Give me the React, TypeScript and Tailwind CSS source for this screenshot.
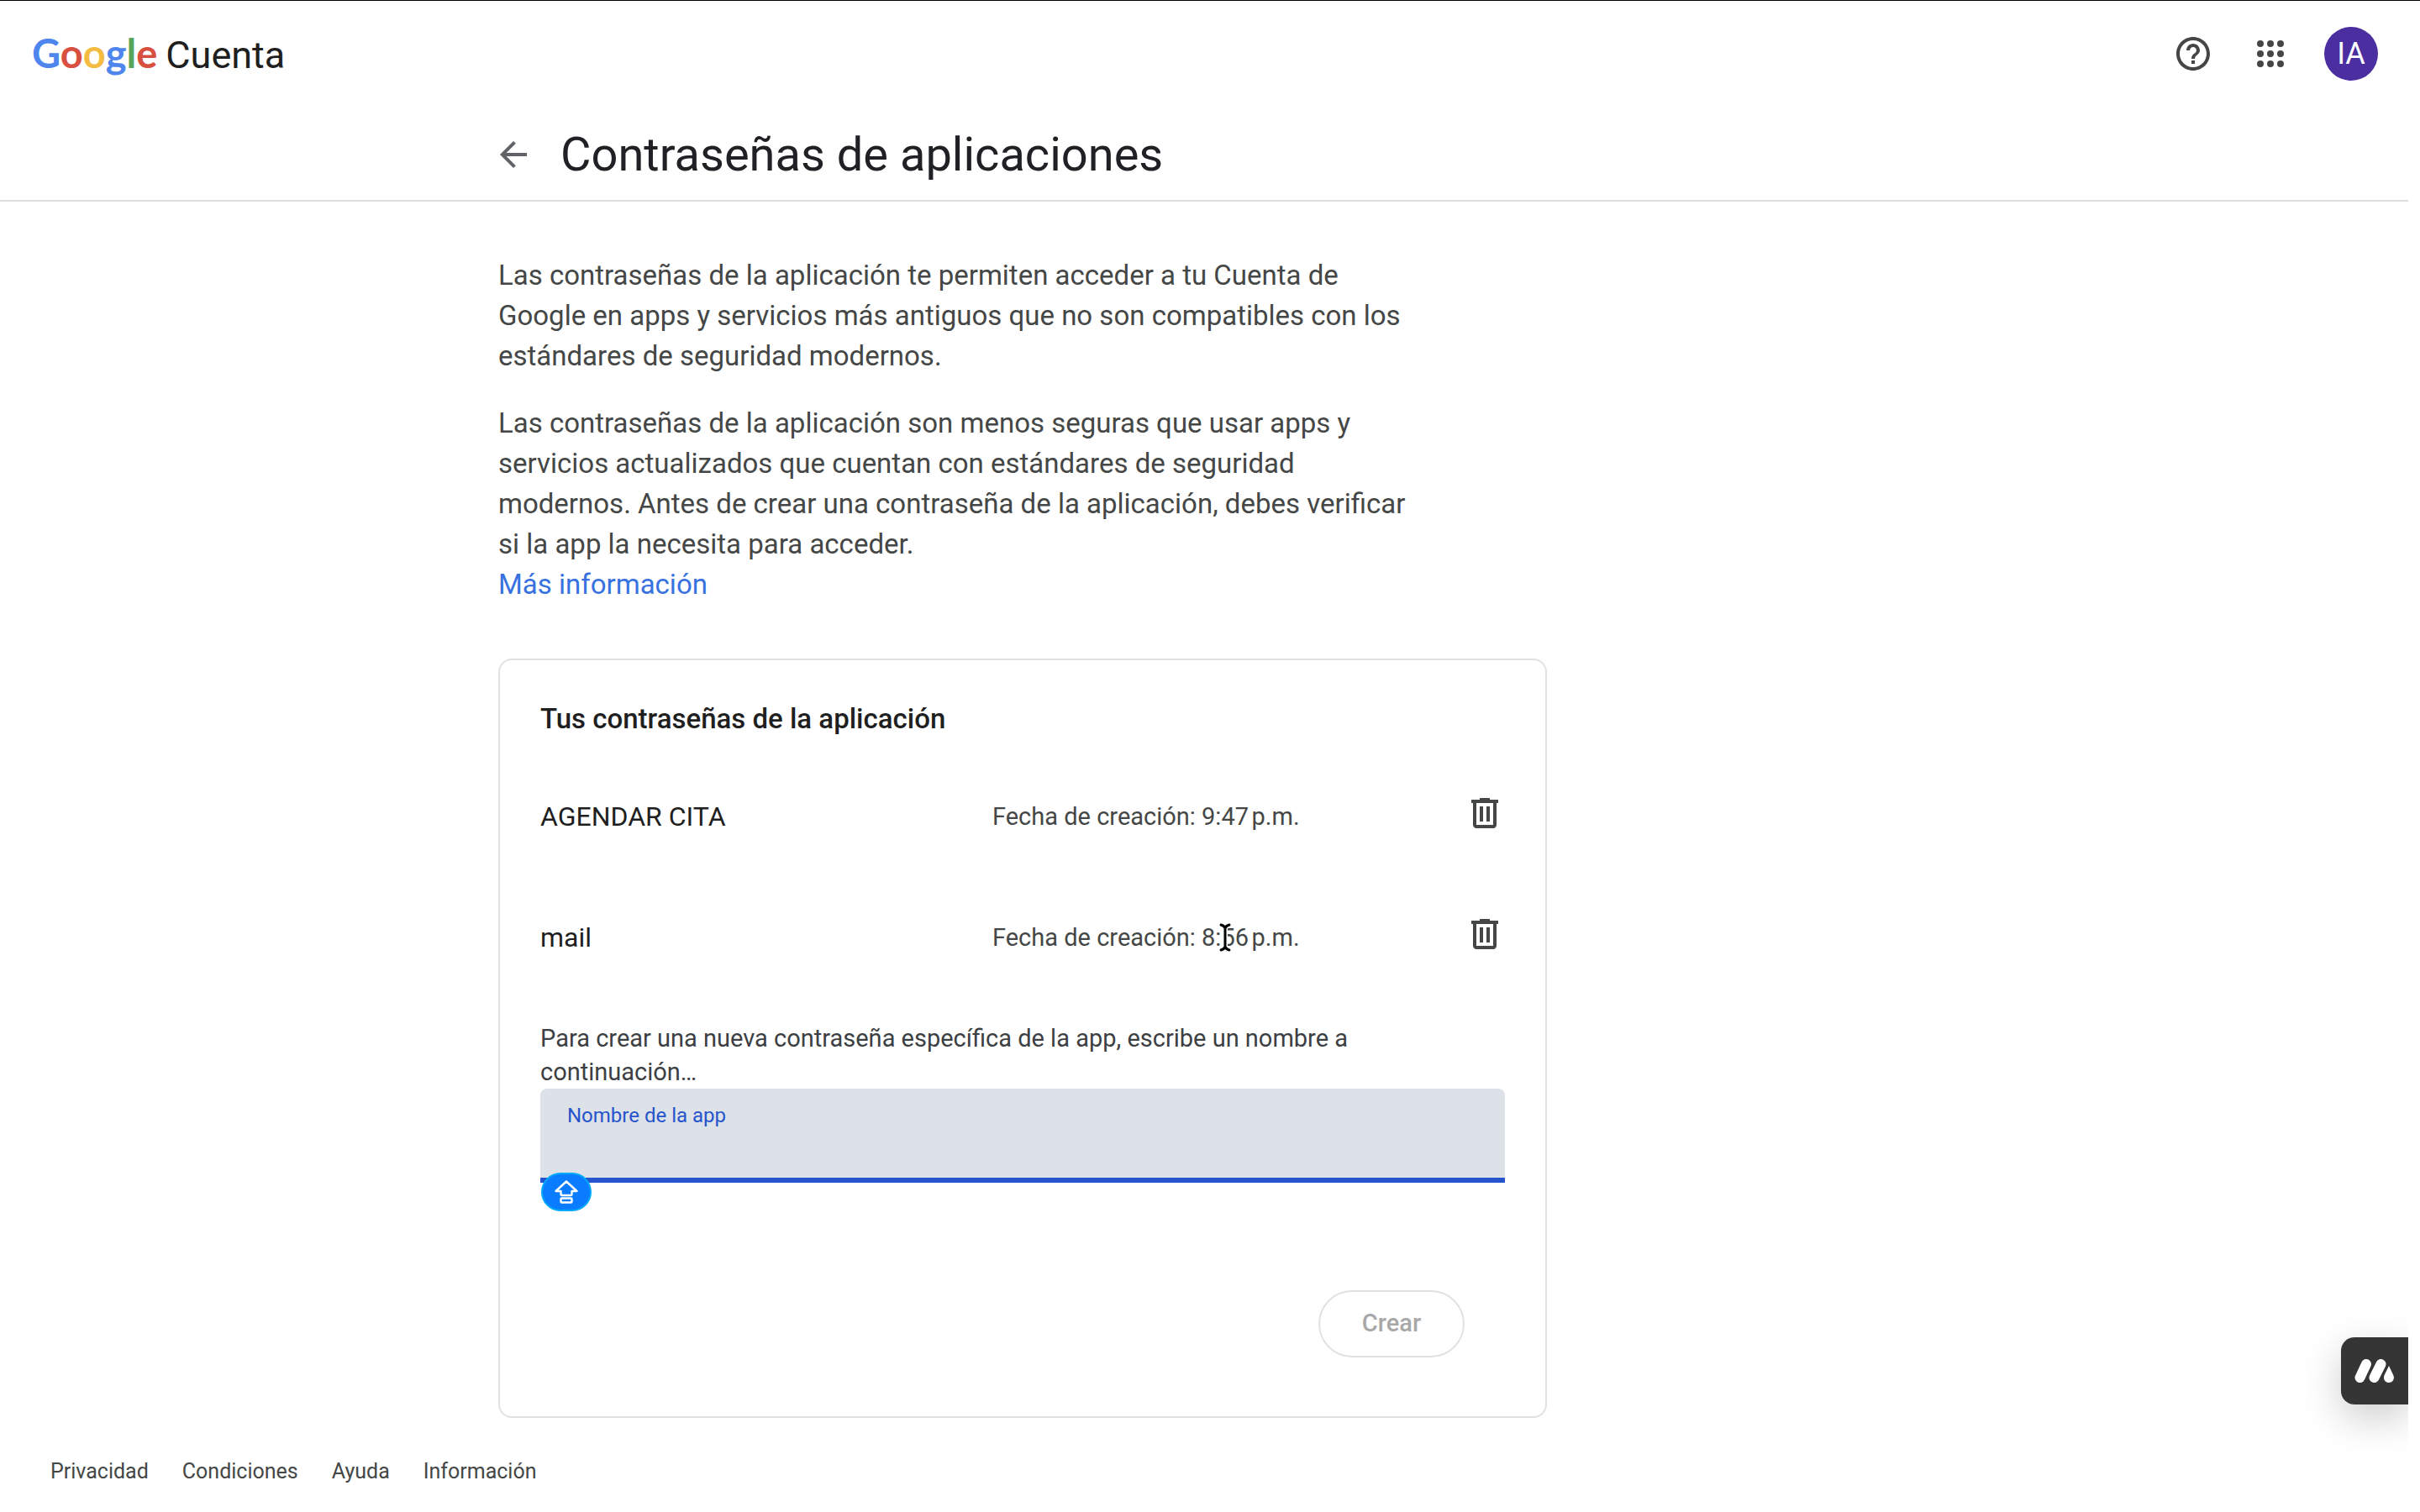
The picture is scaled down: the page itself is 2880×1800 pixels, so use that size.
import { useState } from "react";

const passwords = [
  { name: "AGENDAR CITA", time: "9:47\u202fp.m." },
  { name: "mail", time: "8:56\u202fp.m." },
];

const footerLinks = ["Privacidad", "Condiciones", "Ayuda", "Información"];

function Logo() {
  return (
    <a href="#inicio" className="flex items-baseline gap-2.5 text-[45px] leading-[52px]">
      <span className="font-['Lato'] text-[47px] font-bold" aria-label="Google">
        <span className="text-[#4f86ee]">G</span>
        <span className="text-[#d85040]">o</span>
        <span className="text-[#f4bd42]">o</span>
        <span className="text-[#4f86ee]">g</span>
        <span className="text-[#58a55c]">l</span>
        <span className="text-[#d85040]">e</span>
      </span>
      <span className="text-[#1f1f1f]">Cuenta</span>
    </a>
  );
}

function HelpIcon() {
  return (
    <svg viewBox="0 0 24 24" className="size-12" fill="currentColor" aria-hidden="true">
      <path d="M11 18h2v-2h-2v2zm1-16C6.48 2 2 6.48 2 12s4.48 10 10 10 10-4.48 10-10S17.52 2 12 2zm0 18c-4.41 0-8-3.59-8-8s3.59-8 8-8 8 3.59 8 8-3.59 8-8 8zm0-14c-2.21 0-4 1.79-4 4h2c0-1.1.9-2 2-2s2 .9 2 2c0 2-3 1.75-3 5h2c0-2.25 3-2.5 3-5 0-2.21-1.79-4-4-4z" />
    </svg>
  );
}

function AppsIcon() {
  const steps = [6, 12, 18];
  return (
    <svg viewBox="0 0 24 24" className="size-12" fill="currentColor" aria-hidden="true">
      {steps.map((y) => steps.map((x) => <circle key={`${x}-${y}`} cx={x} cy={y} r="2" />))}
    </svg>
  );
}

function BackIcon() {
  return (
    <svg viewBox="0 0 24 24" className="size-12" fill="currentColor" aria-hidden="true">
      <path d="M20 11H7.83l5.59-5.59L12 4l-8 8 8 8 1.41-1.41L7.83 13H20v-2z" />
    </svg>
  );
}

function TrashIcon() {
  return (
    <svg viewBox="0 0 24 24" className="size-12" fill="currentColor" aria-hidden="true">
      <path d="M15 4V3H9v1H4v2h1v13c0 1.1.9 2 2 2h10c1.1 0 2-.9 2-2V6h1V4h-5zm2 15H7V6h10v13zM9 8h2v9H9zm4 0h2v9h-2z" />
    </svg>
  );
}

function TextCursor() {
  return (
    <svg viewBox="0 0 16 36" className="absolute top-[14px] left-[269px] h-9 w-4" fill="none" aria-hidden="true">
      <path d="M3 3Q7 4 8 7Q9 4 13 3M8 6V30M3 33Q7 32 8 29Q9 32 13 33" stroke="#fff" strokeWidth="6" strokeLinecap="round" />
      <path d="M3 3Q7 4 8 7Q9 4 13 3M8 6V30M3 33Q7 32 8 29Q9 32 13 33" stroke="#000" strokeWidth="3" strokeLinecap="round" />
    </svg>
  );
}

function CapsLockBadge() {
  return (
    <span className="absolute top-[100px] left-px flex h-[46px] w-[60px] items-center justify-center rounded-full border-2 border-[#00a8fc] bg-[#0a7cff]">
      <svg viewBox="0 0 30 30" className="size-[30px]" fill="none" stroke="#fff" strokeWidth="2.400" strokeLinejoin="round" aria-label="Bloq Mayús">
        <path d="M15 2.500L2.500 14H8.500V17.500Q8.500 19 10 19H20Q21.500 19 21.500 17.500V14H27.500Z" />
        <rect x="8.500" y="22.500" width="13" height="5" rx="1" />
      </svg>
    </span>
  );
}

function FloatingWidget() {
  return (
    <button
      type="button"
      aria-label="Abrir asistente"
      className="absolute top-[1591px] right-0 flex size-20 items-center rounded-l-2xl bg-[#353535] pl-4 shadow-[0_16px_48px_rgba(0,0,0,0.2)]"
    >
      <svg viewBox="0 0 48 28" className="h-7 w-12" aria-hidden="true">
        <path d="M14 6L6.500 22M31.500 6L23.500 22" stroke="#fff" strokeWidth="12" strokeLinecap="round" />
        <path d="M41 8L46 18.500C48.500 23.500 45.500 28 41 28S33.500 23.500 35.800 18.500Z" fill="#fff" />
      </svg>
    </button>
  );
}

export default function App() {
  const [appName, setAppName] = useState("");

  return (
    <div className="min-h-screen border-t border-black bg-white pr-[14px] font-['Roboto',sans-serif] text-[#1f1f1f]">
      <div className="relative flex min-h-[calc(100vh-1px)] flex-col overflow-hidden">
        <header className="flex h-[126px] items-center justify-between pr-9 pl-[38px]">
          <Logo />
          <div className="flex items-center text-[#444746]">
            <button type="button" aria-label="Ayuda" className="mr-11">
              <HelpIcon />
            </button>
            <button type="button" aria-label="Aplicaciones de Google" className="mr-10">
              <AppsIcon />
            </button>
            <button
              type="button"
              aria-label="Cuenta"
              className="flex size-16 items-center justify-center rounded-full bg-[#4b2e9f] text-4xl text-white"
            >
              IA
            </button>
          </div>
        </header>

        <div className="border-b-2 border-[#dadce0]">
          <div className="mx-auto flex h-[111px] max-w-[1680px] items-center gap-8 pt-[3px]">
            <button type="button" aria-label="Atrás" className="-ml-[6px] text-[#5f6368]">
              <BackIcon />
            </button>
            <h1 className="text-[56px] leading-[72px] text-[#202124]">Contraseñas de aplicaciones</h1>
          </div>
        </div>

        <main className="mx-auto w-full max-w-[1680px] pt-16">
          <div className="flex max-w-[1090px] flex-col gap-8 text-[33px] leading-[48px] text-[#444746]">
            <p>
              Las contraseñas de la aplicación te permiten acceder a tu Cuenta de
              <br />
              Google en apps y servicios más antiguos que no son compatibles con los
              <br />
              estándares de seguridad modernos.
            </p>
            <p>
              Las contraseñas de la aplicación son menos seguras que usar apps y
              <br />
              servicios actualizados que cuentan con estándares de seguridad
              <br />
              modernos. Antes de crear una contraseña de la aplicación, debes verificar
              <br />
              si la app la necesita para acceder.
              <br />
              <a href="#mas-informacion" className="text-[#3871e0]">
                Más información
              </a>
            </p>
          </div>

          <section className="mt-16 max-w-[1248px] rounded-2xl border-2 border-[#e1e1e1] px-12 pt-[46px]">
            <h2 className="text-[33px] leading-[48px] font-medium">Tus contraseñas de la aplicación</h2>

            <ul className="mt-16 flex flex-col gap-24">
              {passwords.map((item, index) => (
                <li key={item.name} className="flex h-12 items-center">
                  <span className="w-[538px] pt-2 text-[32px] leading-[48px]">{item.name}</span>
                  <span className="relative flex-1 pt-2 text-[29px] leading-[48px] text-[#444746]">
                    Fecha de creación: {item.time}
                    {index === 1 && <TextCursor />}
                  </span>
                  <button type="button" aria-label={`Eliminar ${item.name}`} className="text-[#444746]">
                    <TrashIcon />
                  </button>
                </li>
              ))}
            </ul>

            <p className="mt-20 text-[29px] leading-10 text-[#3c4043]">
              Para crear una nueva contraseña específica de la app, escribe un nombre a
              <br />
              continuación…
            </p>

            <div className="relative h-28 rounded-t-lg border-b-[6px] border-[#2554cc] bg-[#dde1e8]">
              <label htmlFor="app-name" className="block pt-4 pl-8 text-2xl leading-8 text-[#2554cc]">
                Nombre de la app
              </label>
              <input
                id="app-name"
                type="text"
                value={appName}
                onChange={(event) => setAppName(event.target.value)}
                className="block h-[52px] w-full bg-transparent px-8 text-[32px] outline-none"
              />
              <CapsLockBadge />
            </div>

            <div className="mt-32 mb-[70px] flex justify-end pr-12">
              <button
                type="button"
                disabled
                className="h-20 w-[174px] rounded-full border-2 border-[#e1e1e1] text-[29px] font-medium text-[#a8a8a8]"
              >
                Crear
              </button>
            </div>
          </section>
        </main>

        <footer className="flex gap-10 px-[60px] pt-12 text-[25px] leading-8 text-[#444746]">
          {footerLinks.map((label) => (
            <a key={label} href={`#${label.toLowerCase()}`}>
              {label}
            </a>
          ))}
        </footer>

        <FloatingWidget />
      </div>
    </div>
  );
}
